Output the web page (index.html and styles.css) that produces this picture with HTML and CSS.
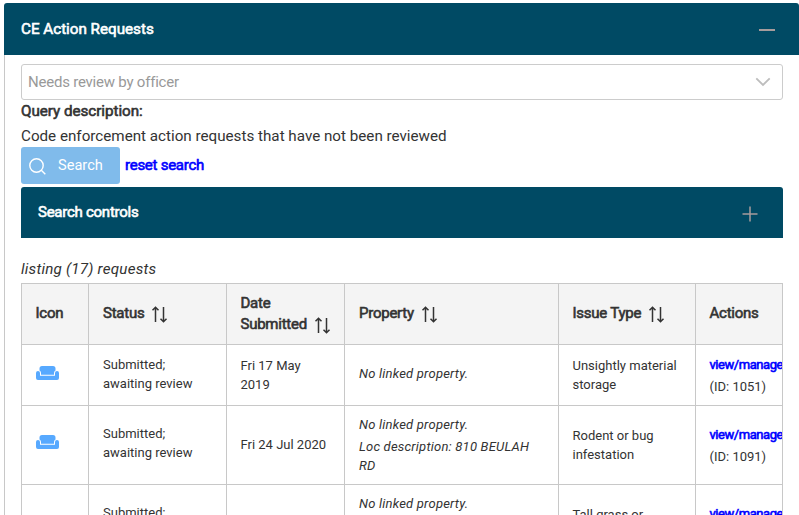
FILE: index.html
```html
<!DOCTYPE html>
<html lang="en">
<head>
<meta charset="utf-8">
<title>CE Action Requests</title>
<link rel="stylesheet" href="styles.css">
</head>
<body>
<svg class="defs" width="0" height="0" aria-hidden="true">
  <symbol id="sort" viewBox="0 0 17 17"><path d="M4.500 16V1.200M1.500 4.200l3-3L7.500 4.200M12.500 1v14.800M9.500 12.800l3 3L15.500 12.800" fill="none" stroke="currentColor" stroke-width="1.500"/></symbol>
  <symbol id="couch" viewBox="0 0 23 14"><path d="M3.500 4.500V2.500Q3.500 0 6 0H17Q19.500 0 19.500 2.500V4.500Q18 5.300 18 7V8.700H5V7Q5 5.300 3.500 4.500Z"/><path d="M2 5Q4 5 4 7V9.700H19V7Q19 5 21 5Q23 5 23 7V12Q23 14 21 14H2Q0 14 0 12V7Q0 5 2 5Z"/></symbol>
</svg>
<section class="panel">
  <header class="bar"><span class="strong">CE Action Requests</span>
    <svg class="toggle" width="16" height="16" viewBox="0 0 16 16"><path d="M0 8H16" stroke-width="2"/></svg></header>
  <div class="body">
    <div class="select"><span>Needs review by officer</span>
      <svg width="16" height="10" viewBox="0 0 16 10"><path d="M1.300 1.300L8 8L14.700 1.300" fill="none" stroke="#bdbdbd" stroke-width="1.800"/></svg></div>
    <div class="line strong">Query description:</div>
    <div class="line">Code enforcement action requests that have not been reviewed</div>
    <div class="actions">
      <button class="search"><svg width="17" height="17" viewBox="0 0 17 17"><circle cx="7.500" cy="7.500" r="6.700"/><path d="M12.300 12.300L16.300 16.300"/></svg><span>Search</span></button>
      <a class="strong">reset search</a>
    </div>
    <header class="bar inner"><span class="strong">Search controls</span>
      <svg class="toggle" width="16" height="16" viewBox="0 0 16 16"><path d="M0.500 8H15.500M8 0.500V15.500" stroke-width="1.500"/></svg></header>
    <div class="count">listing (17) requests</div>
    <table>
      <colgroup><col class="c-icon"><col class="c-status"><col class="c-date"><col class="c-property"><col class="c-issue"><col class="c-actions"></colgroup>
      <thead><tr>
        <th>Icon</th>
        <th>Status<svg class="sort"><use href="#sort"/></svg></th>
        <th class="two">Date<br>Submitted<svg class="sort"><use href="#sort"/></svg></th>
        <th>Property<svg class="sort"><use href="#sort"/></svg></th>
        <th>Issue Type<svg class="sort"><use href="#sort"/></svg></th>
        <th>Actions</th>
      </tr></thead>
      <tbody>
        <tr class="short">
          <td><svg class="couch"><use href="#couch"/></svg></td>
          <td class="status">Submitted; awaiting review</td>
          <td>Fri 17 May 2019</td>
          <td class="property"><p>No linked property.</p></td>
          <td>Unsightly material storage</td>
          <td class="manage"><a class="strong">view/manage</a><p>(ID: 1051)</p></td>
        </tr>
        <tr>
          <td><svg class="couch"><use href="#couch"/></svg></td>
          <td class="status">Submitted; awaiting review</td>
          <td class="date">Fri 24 Jul 2020</td>
          <td class="property"><p>No linked property.</p><p class="next">Loc description: 810 BEULAH RD</p></td>
          <td>Rodent or bug infestation</td>
          <td class="manage"><a class="strong">view/manage</a><p>(ID: 1091)</p></td>
        </tr>
        <tr>
          <td><svg class="couch"><use href="#couch"/></svg></td>
          <td class="status">Submitted; awaiting review</td>
          <td class="date">Fri 24 Jul 2020</td>
          <td class="property"><p>No linked property.</p><p class="next">Loc description: 810 BEULAH RD</p></td>
          <td>Tall grass or weeds</td>
          <td class="manage"><a class="strong">view/manage</a><p>(ID: 1092)</p></td>
        </tr>
      </tbody>
    </table>
  </div>
</section>
</body>
</html>
```
FILE: styles.css
```css
* { box-sizing: border-box; }
html, body { height: 100%; overflow: hidden; }
body { margin: 0; padding: 3px 0 0 4px; background: #fff; color: #333; font: 15.2px/25px Roboto, sans-serif; }
p { margin: 0; }
.defs { display: none; }
.strong, th { font-weight: 400; -webkit-text-stroke: 0.6px currentColor; }
a { color: #00f; }
.panel { width: 795px; height: 512px; overflow: hidden; }
.bar { display: flex; align-items: center; justify-content: space-between; height: 52px; padding: 0 24px 0 17px; background: #004a64; color: #fff; border-radius: 3px 3px 0 0; }
.bar .toggle { stroke: #a69c9c; margin-top: 2px; }
.body { border-left: 1px solid #c8c8c8; padding: 9px 16px 0; height: 460px; }
.select { display: flex; align-items: center; justify-content: space-between; height: 36px; padding: 0 11px 0 6px; border: 1px solid #ccc; border-radius: 3px; color: #999; font-size: 15px; letter-spacing: -0.22px; }
.select + .line { margin-top: -1px; }
.line.strong { letter-spacing: -0.03px; }
.actions { display: flex; align-items: center; gap: 5px; height: 37px; margin-top: -2px; }
.actions a, .inner span { font-size: 15px; letter-spacing: -0.26px; }
.search { display: flex; align-items: center; gap: 12px; width: 99px; height: 37px; padding: 0 8px; border: 0; border-radius: 3px; background: #80bbeb; color: #fff; font: 14.6px/25px Roboto, sans-serif; }
.search svg { fill: none; stroke: #fff; stroke-width: 1.4; margin-top: 2px; }
.inner { height: 51px; margin-top: 3px; padding-right: 25px; }
.count { margin-top: 19px; font-style: italic; letter-spacing: 0.22px; }
table { width: 762px; margin-top: 1px; table-layout: fixed; border-spacing: 0; border: solid #c8c8c8; border-width: 1px 0 0 1px; }
.c-icon { width: 67px; }
.c-status { width: 138px; }
.c-date { width: 118px; }
.c-property { width: 214px; }
.c-issue { width: 137px; }
.c-actions { width: 87px; }
th, td { padding: 0 14px 0 13.5px; border: solid #c8c8c8; border-width: 0 1px 1px 0; text-align: left; vertical-align: middle; }
th { height: 61px; padding-bottom: 2px; background: #f4f4f4; font-size: 15px; line-height: 21px; letter-spacing: -0.25px; white-space: nowrap; }
th.two { padding-bottom: 0; }
th:nth-child(2), th:nth-child(4), td:nth-child(2), td:nth-child(4) { padding-left: 14px; }
.sort { width: 17px; height: 17px; margin: -5px 0 -5px 7px; vertical-align: 0; }
td { height: 79px; font-size: 13px; line-height: 19px; }
.short td { height: 61px; }
td.status { padding-bottom: 4px; }
td.date { padding-bottom: 2px; }
.short .status { padding-bottom: 2px; }
td.property { font-style: italic; letter-spacing: 0.21px; }
.short .property { padding-bottom: 4px; }
.next { margin-top: 3px; }
.couch { display: block; width: 23px; height: 14px; margin-top: -6px; fill: #57a9ff; }
.short .couch { margin-top: -4px; }
tr:last-child .couch { margin-top: 0; }
td.manage { overflow: hidden; white-space: nowrap; padding-right: 0; }
.manage a { letter-spacing: -0.45px; }
.manage p { margin-top: 3px; }
```
